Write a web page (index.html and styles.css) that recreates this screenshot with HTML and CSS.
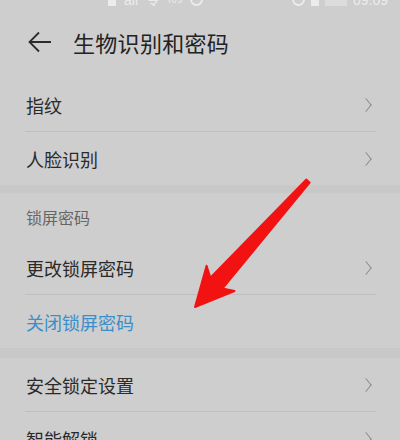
FILE: index.html
```html
<!DOCTYPE html>
<html lang="zh-CN">
  <head>
    <meta charset="UTF-8" />
    <meta name="viewport" content="width=device-width, initial-scale=1.0" />
    <title>生物识别和密码</title>
    <link rel="stylesheet" href="styles.css">
  </head>
  <body>
    <main id="screen">
      <div class="statusbar">
        <div class="status-left">
          <span class="sim"></span>
          <span class="glyph">all</span>
          <span class="glyph">令</span>
          <span class="glyph small">K/s</span>
          <span class="dot"></span>
        </div>
        <div class="status-right">
          <span class="dot"></span>
          <span class="sim"></span>
          <span class="batt"></span>
          <span class="glyph">09:09</span>
        </div>
      </div>

      <header class="topbar">
        <svg class="back" width="24" height="22" viewBox="0 0 24 22">
          <path d="M23 11H2M11 1.5L1.5 11L11 20.5" fill="none" stroke="#2b2b2b" stroke-width="1.8" />
        </svg>
        <h1>生物识别和密码</h1>
      </header>

      <section class="group">
        <div class="row"><span>指纹</span><i class="chev"></i></div>
        <div class="row"><span>人脸识别</span><i class="chev"></i></div>
      </section>

      <div class="gap"></div>

      <section class="group">
        <div class="subhead">锁屏密码</div>
        <div class="row"><span>更改锁屏密码</span><i class="chev"></i></div>
        <div class="row link"><span>关闭锁屏密码</span></div>
      </section>

      <div class="gap wide"></div>

      <section class="group">
        <div class="row"><span>安全锁定设置</span><i class="chev"></i></div>
        <div class="row"><span>智能解锁</span><i class="chev"></i></div>
      </section>

      <!-- red pointer drawn over the list -->
      <svg class="pointer" width="400" height="440" viewBox="0 0 400 440">
        <polygon points="195,307 234.5,291 222.4,288.6 309.6,182.6 306.2,179.6 210.4,277.8 206.6,265.8"
                 fill="#f21212" stroke="#f21212" stroke-width="2" stroke-linejoin="round" />
      </svg>
    </main>
  </body>
</html>
```

FILE: styles.css
```css
body {
  margin: 0;
  background-color: #cecece;
  font-family: "Noto Sans CJK SC", "Noto Sans", sans-serif;
  color: #2a2a2a;
}

#screen {
  position: relative;
  width: 400px;
  height: 440px;
  overflow: hidden;
}

.statusbar {
  height: 6px;
  overflow: hidden;
  display: flex;
  justify-content: space-between;
  align-items: flex-end;
  padding: 0 12px 0 108px;
}

.status-left,
.status-right {
  display: flex;
  align-items: flex-end;
  gap: 8px;
}

.status-right {
  gap: 6px;
}

.glyph {
  font-family: "Liberation Sans", sans-serif;
  font-size: 14px;
  line-height: 12px;
  color: #ececec;
}

.glyph.small {
  font-size: 10px;
}

.sim {
  width: 8px;
  height: 12px;
  background-color: #ececec;
}

.dot {
  width: 9px;
  height: 9px;
  border: 2px solid #ececec;
  border-radius: 50%;
}

.batt {
  width: 22px;
  height: 10px;
  background-color: #dcdcdc;
}

.topbar {
  height: 72px;
  display: flex;
  align-items: center;
  padding-left: 28px;
}

.back {
  margin-right: 21px;
}

.topbar h1 {
  margin: 0;
  font-size: 22px;
  font-weight: normal;
  color: #222;
  letter-spacing: 0.3px;
}

.group {
  margin: 0 24px 0 25px;
}

.row {
  height: 53px;
  display: flex;
  align-items: center;
  justify-content: space-between;
  font-size: 18px;
  padding-left: 1px;
  border-bottom: 1px solid #bfbfbf;
}

.row:last-child {
  border-bottom: none;
}

.row.link {
  color: #3a8fca;
}

.chev {
  width: 9px;
  height: 9px;
  margin-right: 5px;
  border-top: 1.4px solid #8a8a8a;
  border-right: 1.4px solid #8a8a8a;
  transform: scaleX(0.8) rotate(45deg);
}

.subhead {
  height: 48px;
  display: flex;
  align-items: center;
  padding-left: 1px;
  font-size: 16px;
  color: #666;
}

.gap {
  height: 8px;
  background-color: #c8c8c8;
}

.gap.wide {
  height: 10px;
}

.pointer {
  position: absolute;
  left: 0;
  top: 0;
}
```
